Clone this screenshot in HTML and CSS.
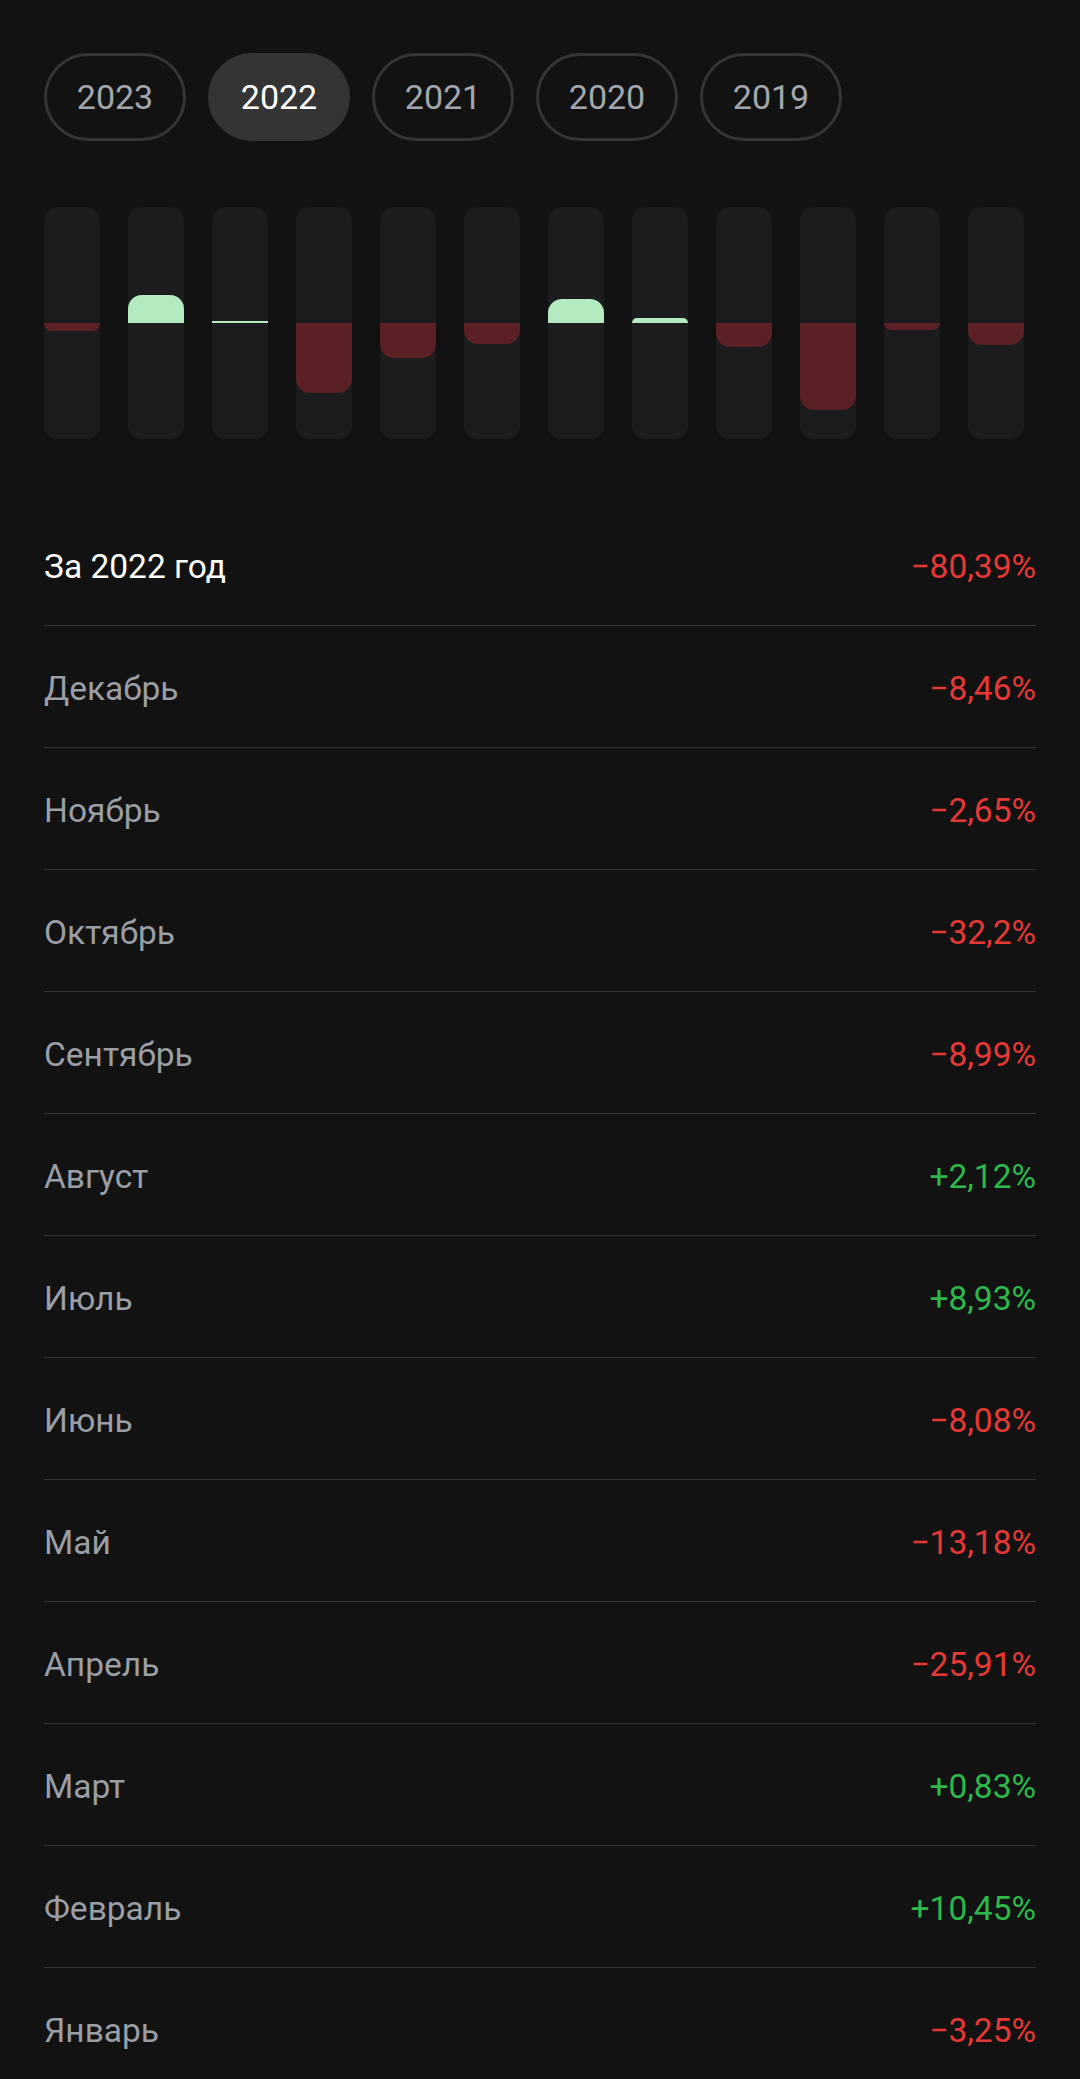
FILE: index.html
```html
<!DOCTYPE html>
<html lang="ru">
<head>
<meta charset="utf-8">
<title>Доходность по месяцам</title>
<link rel="stylesheet" href="styles.css">
</head>
<body>
<div class="page">
  <div class="years">
    <div class="pill">2023</div>
    <div class="pill active">2022</div>
    <div class="pill">2021</div>
    <div class="pill">2020</div>
    <div class="pill">2019</div>
  </div>

  <div class="chart">
    <div class="bar"><div class="up"></div><div class="down"><div class="fill neg" style="height:8px"></div></div></div>
    <div class="bar"><div class="up"><div class="fill pos" style="height:28px"></div></div><div class="down"></div></div>
    <div class="bar"><div class="up"><div class="fill pos flat" style="height:2px"></div></div><div class="down"></div></div>
    <div class="bar"><div class="up"></div><div class="down"><div class="fill neg" style="height:70px"></div></div></div>
    <div class="bar"><div class="up"></div><div class="down"><div class="fill neg" style="height:35px"></div></div></div>
    <div class="bar"><div class="up"></div><div class="down"><div class="fill neg" style="height:21px"></div></div></div>
    <div class="bar"><div class="up"><div class="fill pos" style="height:24px"></div></div><div class="down"></div></div>
    <div class="bar"><div class="up"><div class="fill pos" style="height:5px"></div></div><div class="down"></div></div>
    <div class="bar"><div class="up"></div><div class="down"><div class="fill neg" style="height:24px"></div></div></div>
    <div class="bar"><div class="up"></div><div class="down"><div class="fill neg" style="height:87px"></div></div></div>
    <div class="bar"><div class="up"></div><div class="down"><div class="fill neg" style="height:7px"></div></div></div>
    <div class="bar"><div class="up"></div><div class="down"><div class="fill neg" style="height:22px"></div></div></div>
  </div>

  <div class="list">
    <div class="row total"><span class="label">За 2022 год</span><span class="val neg">−80,39%</span></div>
    <div class="row"><span class="label">Декабрь</span><span class="val neg">−8,46%</span></div>
    <div class="row"><span class="label">Ноябрь</span><span class="val neg">−2,65%</span></div>
    <div class="row"><span class="label">Октябрь</span><span class="val neg">−32,2%</span></div>
    <div class="row"><span class="label">Сентябрь</span><span class="val neg">−8,99%</span></div>
    <div class="row"><span class="label">Август</span><span class="val pos">+2,12%</span></div>
    <div class="row"><span class="label">Июль</span><span class="val pos">+8,93%</span></div>
    <div class="row"><span class="label">Июнь</span><span class="val neg">−8,08%</span></div>
    <div class="row"><span class="label">Май</span><span class="val neg">−13,18%</span></div>
    <div class="row"><span class="label">Апрель</span><span class="val neg">−25,91%</span></div>
    <div class="row"><span class="label">Март</span><span class="val pos">+0,83%</span></div>
    <div class="row"><span class="label">Февраль</span><span class="val pos">+10,45%</span></div>
    <div class="row"><span class="label">Январь</span><span class="val neg">−3,25%</span></div>
  </div>
</div>
</body>
</html>
```
FILE: styles.css
```css
html, body {
  margin: 0;
  padding: 0;
  background: #121212;
}
body {
  font-family: Roboto, "Noto Sans", "Liberation Sans", sans-serif;
  color: #fff;
}
.page {
  padding: 53px 44px 0 44px;
}
.years {
  display: flex;
  gap: 22px;
}
.pill {
  box-sizing: border-box;
  width: 142px;
  height: 88px;
  border: 3px solid #353535;
  border-radius: 44px;
  display: flex;
  align-items: center;
  justify-content: center;
  font-size: 34px;
  color: #a2a7ae;
}
.pill.active {
  background: #343434;
  border-color: #343434;
  color: #ffffff;
}
.chart {
  margin-top: 66px;
  display: flex;
  gap: 28px;
}
.bar {
  width: 56px;
  height: 232px;
  background: #1c1c1e;
  border-radius: 14px;
  display: grid;
  grid-template-rows: 116px 116px;
  overflow: hidden;
}
.up {
  display: flex;
  flex-direction: column;
  justify-content: flex-end;
}
.down {
  display: flex;
  flex-direction: column;
  justify-content: flex-start;
}
.fill.pos {
  background: #b4eac0;
  border-radius: 14px 14px 0 0;
}
.fill.pos.flat {
  border-radius: 0;
}
.fill.neg {
  background: #5a2023;
  border-radius: 0 0 14px 14px;
}
.list {
  margin-top: 65px;
}
.row {
  box-sizing: border-box;
  height: 122px;
  padding-top: 3px;
  border-bottom: 1px solid #333335;
  display: flex;
  align-items: center;
  justify-content: space-between;
  font-size: 33.5px;
}
.label {
  color: #9a9ea5;
}
.row.total .label {
  color: #ffffff;
}
.val.neg {
  color: #e53935;
}
.val.pos {
  color: #2db84a;
}
```
